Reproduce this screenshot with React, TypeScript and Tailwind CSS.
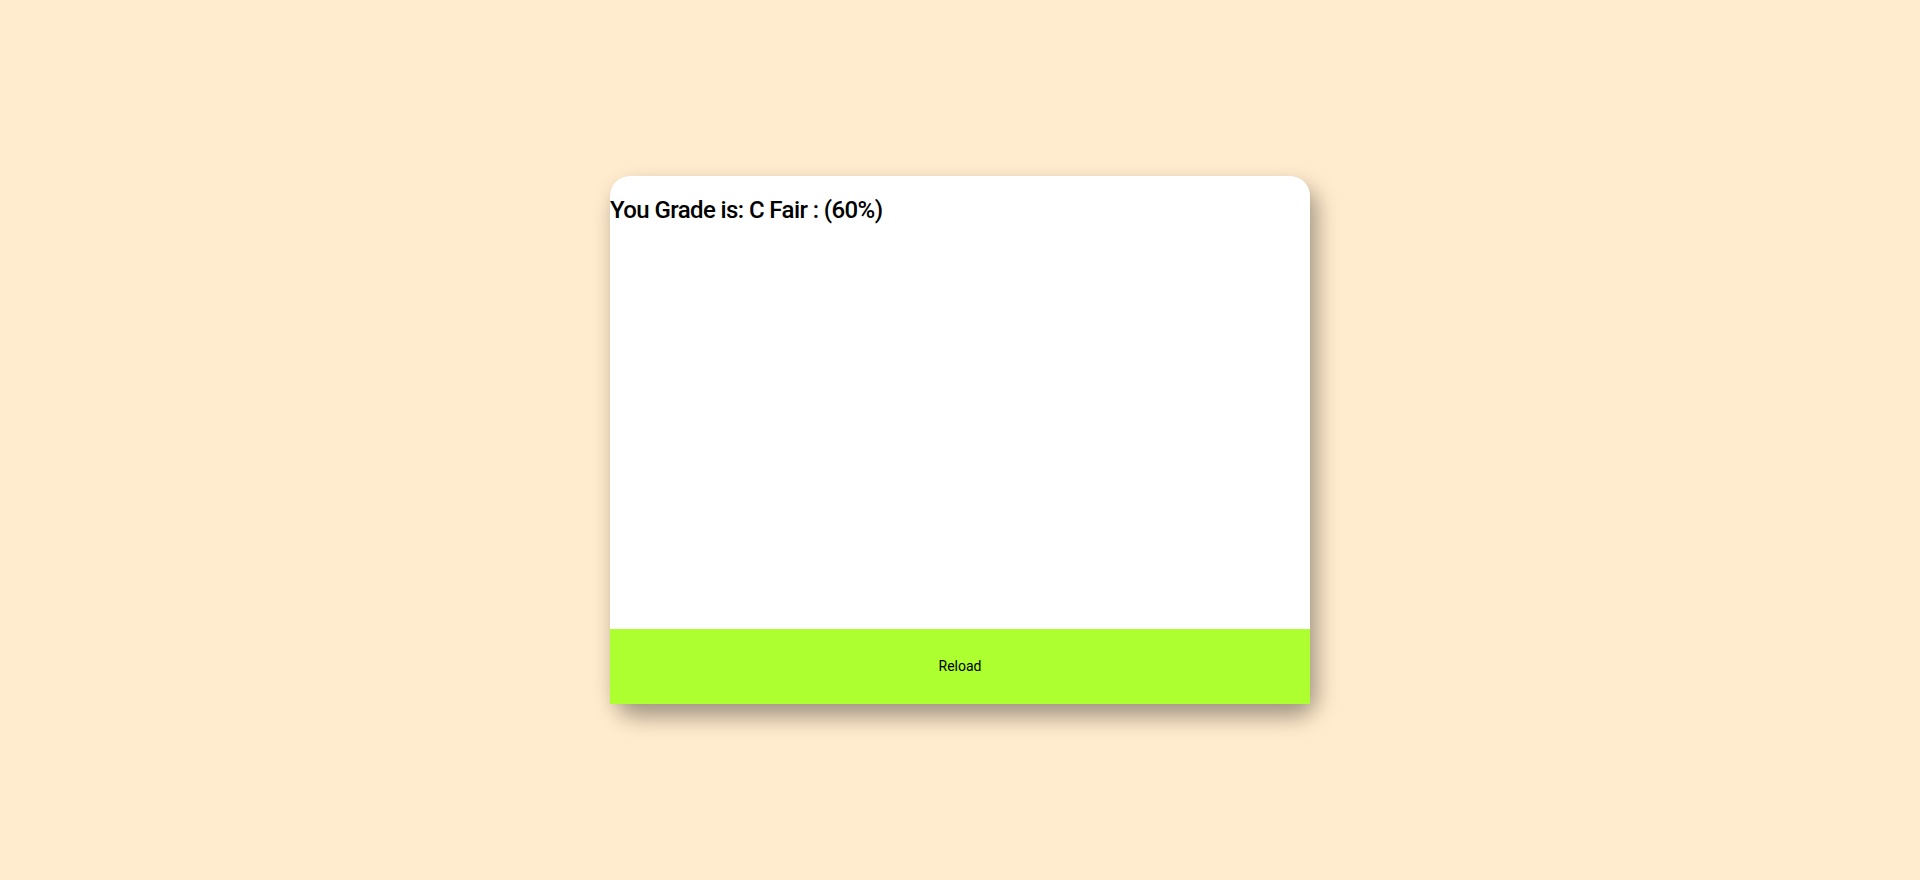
import React from "react";

const App = () => {
  const grade = "C Fair";
  const percent = 60;

  return (
    <div className="flex h-[880px] w-full items-center justify-center bg-[#ffebcd] font-['Roboto',sans-serif]">
      <div className="flex h-[528px] w-[700px] flex-col rounded-[20px] bg-white shadow-[6px_12px_22px_rgba(0,0,0,0.38)]">
        <h2 className="mt-5 flex-1 text-[24px] leading-[normal] font-medium tracking-[-0.6px] text-black">
          You Grade is: {grade} : ({percent}%)
        </h2>
        <button className="h-[75px] w-full bg-[#adff2f] text-[14px] text-black">
          Reload
        </button>
      </div>
    </div>
  );
};

export default App;
